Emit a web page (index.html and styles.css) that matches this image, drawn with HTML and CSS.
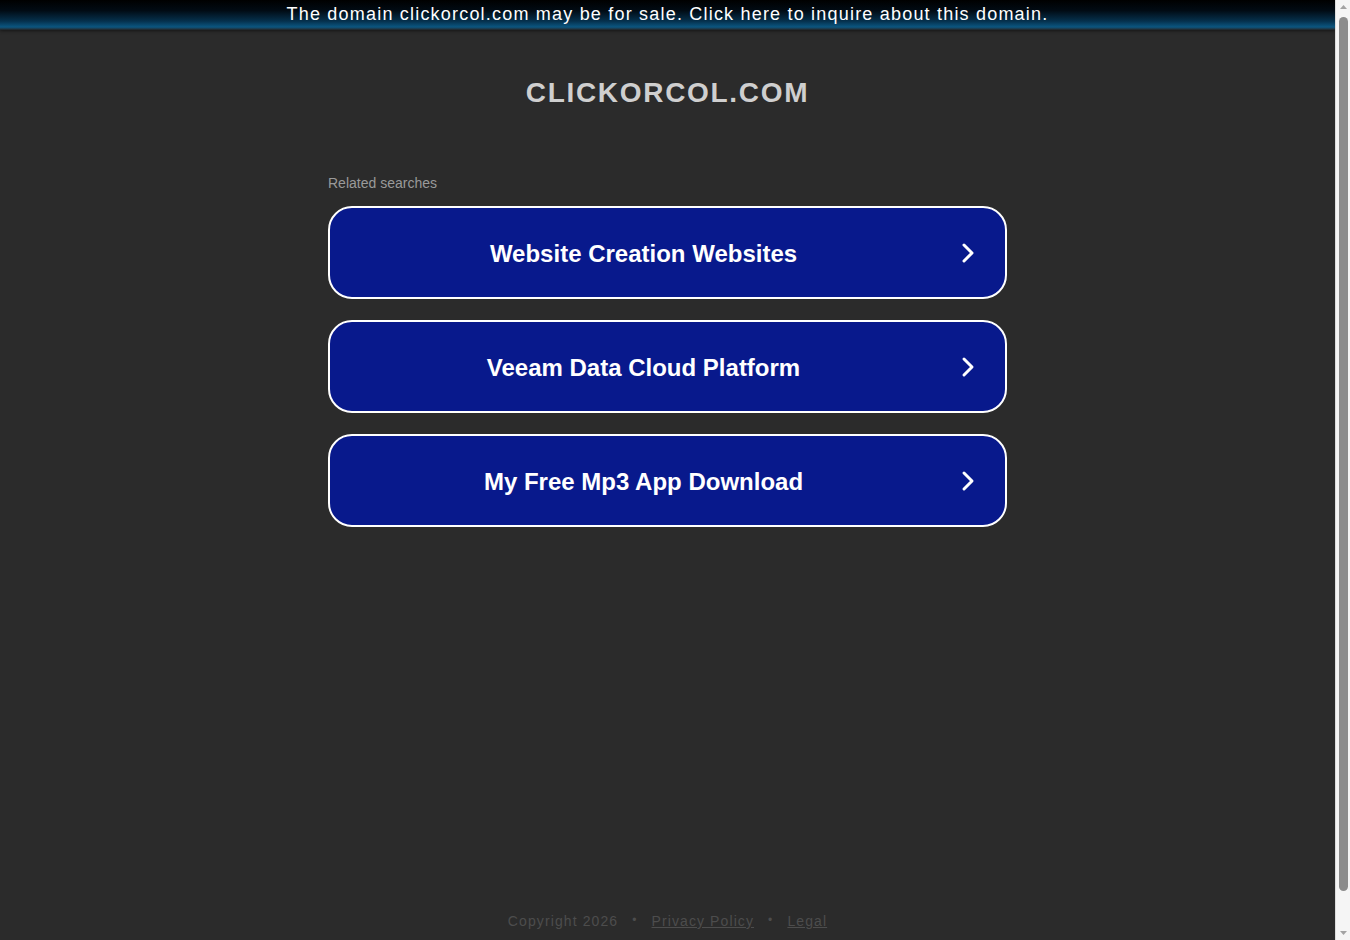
FILE: index.html
```html
<!DOCTYPE html>
<html lang="en">
<head>
<meta charset="utf-8">
<title>clickorcol.com</title>
<link rel="stylesheet" href="styles.css">
</head>
<body>
<div class="page">
  <a class="banner" href="#">The domain clickorcol.com may be for sale. Click here to inquire about this domain.</a>
  <main class="content">
    <h1 class="domain">CLICKORCOL.COM</h1>
    <section class="related">
      <p class="related-title">Related searches</p>
      <a class="search-btn" href="#">
        <span class="search-label">Website Creation Websites</span>
        <svg class="chev" width="20" height="24" viewBox="0 0 20 24"><path d="M7 4 L15 12 L7 20" fill="none" stroke="#fff" stroke-width="3" stroke-linecap="round" stroke-linejoin="round"/></svg>
      </a>
      <a class="search-btn" href="#">
        <span class="search-label">Veeam Data Cloud Platform</span>
        <svg class="chev" width="20" height="24" viewBox="0 0 20 24"><path d="M7 4 L15 12 L7 20" fill="none" stroke="#fff" stroke-width="3" stroke-linecap="round" stroke-linejoin="round"/></svg>
      </a>
      <a class="search-btn" href="#">
        <span class="search-label">My Free Mp3 App Download</span>
        <svg class="chev" width="20" height="24" viewBox="0 0 20 24"><path d="M7 4 L15 12 L7 20" fill="none" stroke="#fff" stroke-width="3" stroke-linecap="round" stroke-linejoin="round"/></svg>
      </a>
    </section>
  </main>
  <footer class="footer">
    <span>Copyright 2026</span>
    <span class="dot">•</span>
    <a href="#">Privacy Policy</a>
    <span class="dot">•</span>
    <a href="#">Legal</a>
  </footer>
</div>
<div class="scrollbar" aria-hidden="true">
  <svg class="arrow" width="15" height="12" viewBox="0 0 15 12"><path d="M4 9 L11 9 L7.5 5 Z" fill="#a3a3a3"/></svg>
  <div class="thumb"></div>
  <svg class="arrow" width="15" height="12" viewBox="0 0 15 12"><path d="M4 3 L11 3 L7.5 7 Z" fill="#a3a3a3"/></svg>
</div>
</body>
</html>
```
FILE: styles.css
```css
html, body {
  margin: 0;
  padding: 0;
  background: #2b2b2b;
}
body {
  font-family: "Liberation Sans", Arial, sans-serif;
}
.page {
  min-height: 978px;
  margin-right: 15px;
  display: flex;
  flex-direction: column;
}
.banner {
  display: block;
  height: 30px;
  line-height: 28px;
  text-align: center;
  color: #fff;
  text-decoration: none;
  font-size: 18px;
  letter-spacing: 1.2px;
  background: linear-gradient(to bottom, #000 0%, #010b14 35%, #05304c 70%, #0b5680 90%, #1c3a4c 96%, #222 100%);
  box-shadow: 0 1px 3px rgba(0,0,0,0.5);
}
.content {
  display: flex;
  flex-direction: column;
  align-items: center;
}
.domain {
  margin: 47px 0 0;
  font-size: 28px;
  line-height: 32px;
  font-weight: bold;
  letter-spacing: 1.7px;
  color: #cfcfcf;
}
.related {
  width: 679px;
  margin-top: 66px;
  display: flex;
  flex-direction: column;
  gap: 21px;
}
.related-title {
  margin: 0 0 -6px;
  font-size: 14px;
  line-height: 16px;
  color: #9a9a9a;
}
.search-btn {
  box-sizing: border-box;
  height: 93px;
  border: 2px solid #fff;
  border-radius: 24px;
  background: #08198c;
  display: flex;
  align-items: center;
  padding-right: 28px;
  text-decoration: none;
  color: #fff;
}
.search-label {
  flex: 1;
  text-align: center;
  font-size: 24px;
  font-weight: bold;
  padding-top: 2px;
}
.chev {
  display: block;
  flex: none;
}
.footer {
  margin-top: auto;
  padding: 0 0 49px;
  display: flex;
  justify-content: center;
  gap: 14px;
  font-size: 14px;
  letter-spacing: 1.1px;
  color: #4d4d4d;
}
.footer a {
  color: #4d4d4d;
  text-decoration: underline;
}
.dot {
  font-size: 12px;
}
.scrollbar {
  position: fixed;
  top: 0;
  right: 0;
  width: 15px;
  height: 100vh;
  background: #f5f5f5;
  border-left: 1px solid #dcdcdc;
  box-sizing: border-box;
  display: flex;
  flex-direction: column;
  align-items: center;
}
.arrow {
  display: block;
  flex: none;
}
.thumb {
  flex: 1;
  width: 9px;
  margin: 5px 0 37px;
  border-radius: 5px;
  background: #8c8c8c;
}
```
